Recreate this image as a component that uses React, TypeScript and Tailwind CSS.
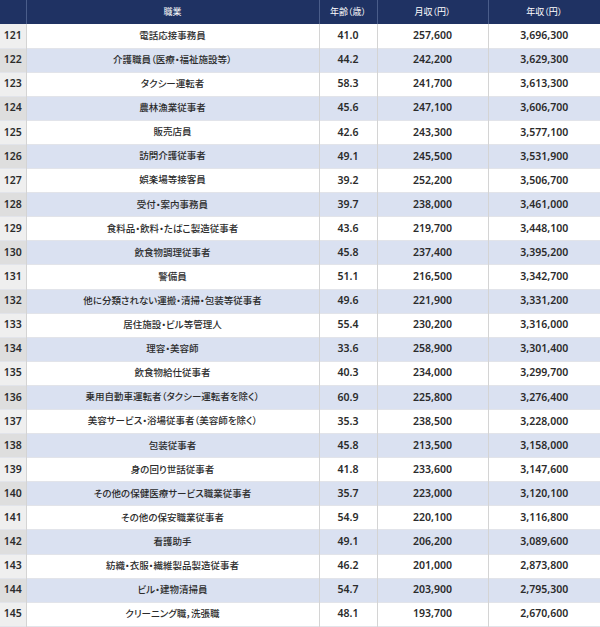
const rows: [number, string, string, string, string][] = [
  [121, '電話応接事務員', '41.0', '257,600', '3,696,300'],
  [122, '介護職員（医療・福祉施設等）', '44.2', '242,200', '3,629,300'],
  [123, 'タクシー運転者', '58.3', '241,700', '3,613,300'],
  [124, '農林漁業従事者', '45.6', '247,100', '3,606,700'],
  [125, '販売店員', '42.6', '243,300', '3,577,100'],
  [126, '訪問介護従事者', '49.1', '245,500', '3,531,900'],
  [127, '娯楽場等接客員', '39.2', '252,200', '3,506,700'],
  [128, '受付・案内事務員', '39.7', '238,000', '3,461,000'],
  [129, '食料品・飲料・たばこ製造従事者', '43.6', '219,700', '3,448,100'],
  [130, '飲食物調理従事者', '45.8', '237,400', '3,395,200'],
  [131, '警備員', '51.1', '216,500', '3,342,700'],
  [132, '他に分類されない運搬・清掃・包装等従事者', '49.6', '221,900', '3,331,200'],
  [133, '居住施設・ビル等管理人', '55.4', '230,200', '3,316,000'],
  [134, '理容・美容師', '33.6', '258,900', '3,301,400'],
  [135, '飲食物給仕従事者', '40.3', '234,000', '3,299,700'],
  [136, '乗用自動車運転者（タクシー運転者を除く）', '60.9', '225,800', '3,276,400'],
  [137, '美容サービス・浴場従事者（美容師を除く）', '35.3', '238,500', '3,228,000'],
  [138, '包装従事者', '45.8', '213,500', '3,158,000'],
  [139, '身の回り世話従事者', '41.8', '233,600', '3,147,600'],
  [140, 'その他の保健医療サービス職業従事者', '35.7', '223,000', '3,120,100'],
  [141, 'その他の保安職業従事者', '54.9', '220,100', '3,116,800'],
  [142, '看護助手', '49.1', '206,200', '3,089,600'],
  [143, '紡織・衣服・繊維製品製造従事者', '46.2', '201,000', '2,873,800'],
  [144, 'ビル・建物清掃員', '54.7', '203,900', '2,795,300'],
  [145, 'クリーニング職，洗張職', '48.1', '193,700', '2,670,600'],
];

const font = "font-['Noto_Sans','Noto_Sans_CJK_JP',sans-serif] [font-feature-settings:'palt']";

export default function App() {
  return (
    <div className={`w-[600px] h-[627px] bg-white ${font} text-[#2b2b2b]`}>
      <table className="w-[600px] table-fixed border-collapse">
        <colgroup>
          <col className="w-[26px]" />
          <col className="w-[293px]" />
          <col className="w-[58px]" />
          <col className="w-[111px]" />
          <col className="w-[112px]" />
        </colgroup>
        <thead>
          <tr className="h-[24px] bg-[#1f3263] text-white text-[9px]">
            <th className="border-r border-[#4a5d8a]"></th>
            <th className="border-r border-[#4a5d8a] font-normal">職業</th>
            <th className="border-r border-[#4a5d8a] font-normal">年齢（歳）</th>
            <th className="border-r border-[#4a5d8a] font-normal">月収（円）</th>
            <th className="font-normal">年収（円）</th>
          </tr>
        </thead>
        <tbody>
          {rows.map(([rank, job, age, month, year], i) => {
            const odd = i % 2 === 1;
            return (
              <tr
                key={rank}
                className={`h-[24.1px] border-b border-[#e2e4ea] ${odd ? 'bg-[#dae1f1]' : 'bg-white'}`}
              >
                <td
                  className={`border-r border-[#d4d4d4] text-center text-[10.5px] font-semibold ${
                    odd ? 'bg-[#dedede]' : 'bg-[#efefef]'
                  }`}
                >
                  {rank}
                </td>
                <td className="border-r border-[#d4d4d4] text-center text-[9.5px] font-medium">{job}</td>
                <td className="border-r border-[#d4d4d4] text-center text-[10.5px] font-semibold">{age}</td>
                <td className="border-r border-[#d4d4d4] text-center text-[10.5px] font-semibold">{month}</td>
                <td className="text-center text-[10.5px] font-semibold">{year}</td>
              </tr>
            );
          })}
        </tbody>
      </table>
    </div>
  );
}
